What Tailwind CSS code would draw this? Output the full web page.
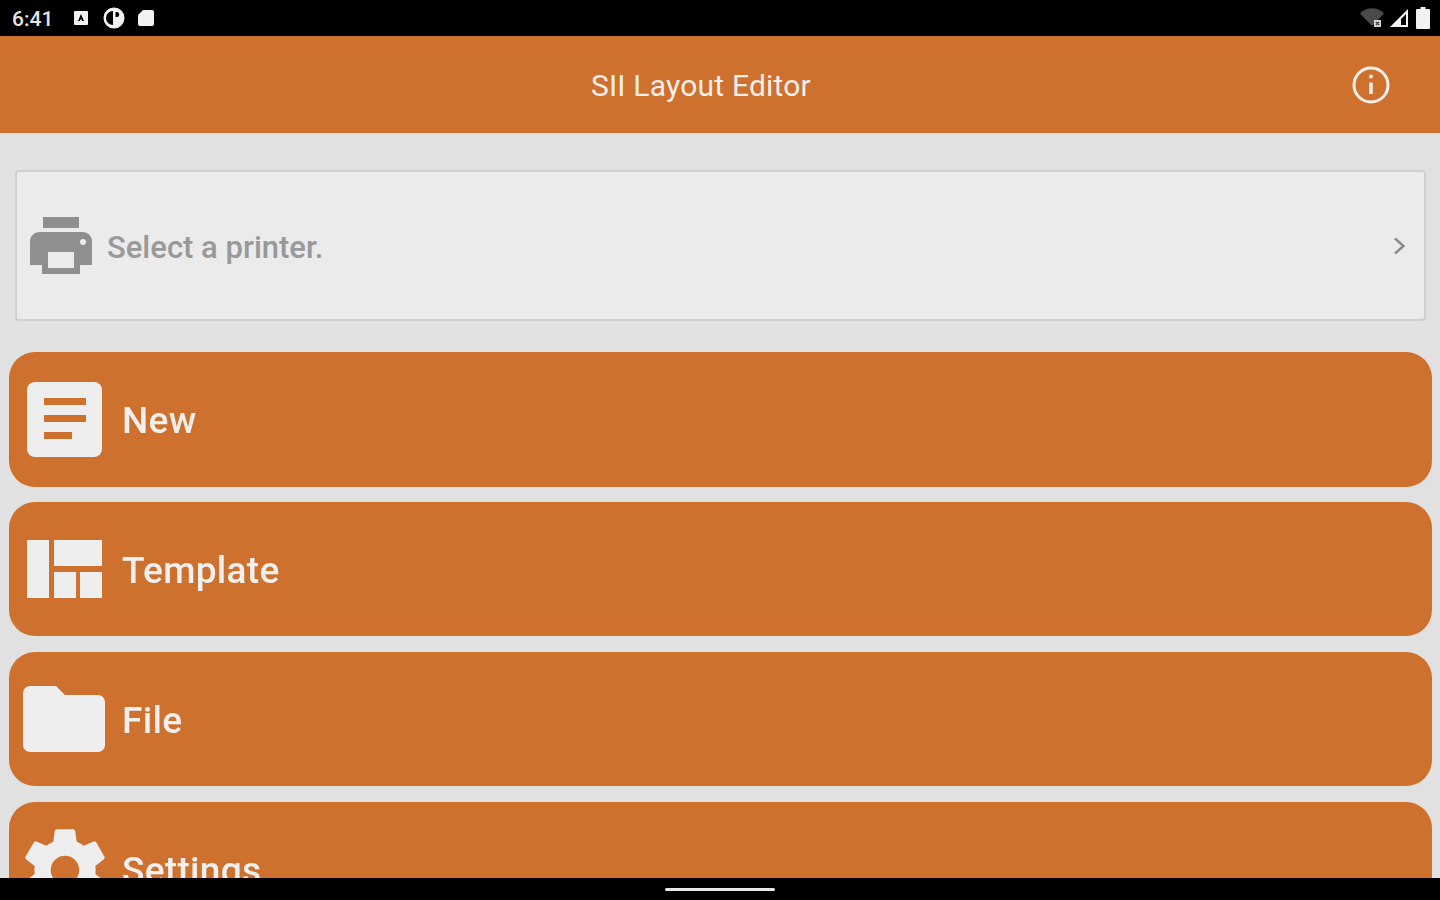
<!DOCTYPE html>
<html lang="en">
<head>
    <meta charset="UTF-8">
    <meta name="viewport" content="width=device-width, initial-scale=1.0">
    <title>SII Layout Editor</title>
    <script src="https://cdn.jsdelivr.net/npm/@tailwindcss/browser@4"></script>
</head>
<body class="bg-[#e1e1e1] font-['Roboto',sans-serif]">

<div class="w-[1440px] h-[900px] flex flex-col overflow-hidden [filter:blur(0.6px)]">
    <!-- status bar -->
    <div class="h-9 shrink-0 bg-black flex items-center justify-between pl-3 pr-[10px] text-[#e4e4e4]">
        <div class="flex items-center">
            <span class="text-[21px] w-[61px] font-medium pt-[3px]">6:41</span>
            <svg class="w-4 h-4 mr-[13px]" viewBox="0 0 16 16"><path fill="#f2f2f2" fill-rule="evenodd" d="M2 1h12a1 1 0 0 1 1 1v12a1 1 0 0 1-1 1H2a1 1 0 0 1-1-1V2a1 1 0 0 1 1-1zm6 3L5 11h1.800l.5-1.400h1.400l.5 1.400H11L8 4z"/></svg>
            <svg class="w-6 h-6 mr-[11px]" viewBox="0 0 24 24"><path fill="#f2f2f2" fill-rule="evenodd" d="M12 1.500a10.500 10.500 0 1 1 0 21 10.500 10.500 0 0 1 0-21zM11 5a7 7 0 0 0 0 14V5zm2.500 1v5h1.200a2.500 2.500 0 0 0 0-5h-1.200z"/></svg>
            <svg class="w-[18px] h-[18px]" viewBox="0 0 18 18"><path fill="#f2f2f2" d="M6 1h9a2 2 0 0 1 2 2v12a2 2 0 0 1-2 2H3a2 2 0 0 1-2-2V6z"/></svg>
        </div>
        <div class="flex items-center gap-[5px]">
            <svg class="w-[24px] h-[22px]" viewBox="0 0 24 22"><path fill="#4a4a4a" d="M0 6.500C6-.5 18-.5 24 6.500L12 19z"/><path fill="#d8d8d8" d="M14 13h7v7h-7z"/><path stroke="#333" stroke-width="1.200" d="M15.800 14.800l3.400 3.400m0-3.400l-3.400 3.400"/></svg>
            <svg class="w-[20px] h-[20px]" viewBox="0 0 20 20"><path fill="#f2f2f2" fill-rule="evenodd" d="M19 1v18H1zM17 6l-5 5v6h5z"/></svg>
            <svg class="w-[14px] h-[22px] ml-[2px]" viewBox="0 0 14 22"><path fill="#f2f2f2" d="M4.500 0h5v2H13a1 1 0 0 1 1 1v18a1 1 0 0 1-1 1H1a1 1 0 0 1-1-1V3a1 1 0 0 1 1-1h3.500z"/></svg>
        </div>
    </div>

    <!-- app bar -->
    <header class="h-[97px] shrink-0 bg-[#ce712f] flex items-center justify-between pl-[591px] pr-[49px] text-[#f5efe9]">
        <h1 class="text-[30px] leading-none tracking-[0.2px] pt-[2px]">SII Layout Editor</h1>
        <svg class="w-10 h-10" viewBox="0 0 40 40" fill="none" stroke="#f5efe9"><circle cx="20" cy="20" r="17" stroke-width="3"/><path stroke-width="3.500" d="M20 17.500V29"/><circle cx="20" cy="11.500" r="2" fill="#f5efe9" stroke="none"/></svg>
    </header>

    <!-- content -->
    <main class="flex-1 min-h-0 overflow-hidden pl-[9px] pr-[8px] pt-[37px]">
        <button class="ml-[6px] w-[1411px] h-[151px] flex items-center justify-between bg-[#ebebeb] border-2 border-[#cfcfcf] rounded-[4px] pl-[12px] pr-[17px]">
            <span class="flex items-center gap-[14px]">
                <svg class="w-[64px] h-[64px]" viewBox="0 0 64 64"><path fill="#8f8f8f" fill-rule="evenodd" d="M14 3h36v11H14zM10 18h44a9 9 0 0 1 9 9v24H51v9H13v-9H1V27a9 9 0 0 1 9-9zm9 20v16h26V38zm35-13a3 3 0 1 0 0 6 3 3 0 0 0 0-6z"/></svg>
                <span class="text-[31px] font-medium text-[#999999] pt-[5px]">Select a printer.</span>
            </span>
            <svg class="w-[14px] h-[18px]" viewBox="0 0 14 18" fill="none" stroke="#8a8a8a" stroke-width="2.400"><path d="M2 1.500L10.500 9 2 16.500"/></svg>
        </button>

        <div class="mt-[31px] flex flex-col">
            <button class="h-[135px] shrink-0 w-full bg-[#ce712f] rounded-[26px] flex items-center pl-[18px] text-[#f2f0ee] text-[37px] tracking-[0.3px] font-medium">
                <span class="w-[95px] flex">
                    <svg class="w-[75px] h-[75px]" viewBox="0 0 75 75"><rect width="75" height="75" rx="8" fill="#eeeeee"/><path fill="#ce712f" d="M17 16h42v7H17zM17 33h42v7H17zM17 50h28v7H17z"/></svg>
                </span>
                <span class="pt-[2px]">New</span>
            </button>
            <button class="mt-[15px] h-[134px] shrink-0 w-full bg-[#ce712f] rounded-[26px] flex items-center pl-[18px] text-[#f2f0ee] text-[37px] tracking-[0.3px] font-medium">
                <span class="w-[95px] flex">
                    <svg class="w-[75px] h-[58px]" viewBox="0 0 75 58"><path fill="#eeeeee" d="M0 0h22v58H0zM27 0h48v26H27zM27 32h22v26H27zM53 32h22v26H53z"/></svg>
                </span>
                <span class="pt-1">Template</span>
            </button>
            <button class="mt-4 h-[134px] shrink-0 w-full bg-[#ce712f] rounded-[26px] flex items-center pl-[14px] text-[#f2f0ee] text-[37px] tracking-[0.3px] font-medium">
                <span class="w-[99px] flex">
                    <svg class="w-[82px] h-[66px]" viewBox="0 0 82 66"><path fill="#eeeeee" d="M7 0h26l9 9h33a7 7 0 0 1 7 7v43a7 7 0 0 1-7 7H7a7 7 0 0 1-7-7V7a7 7 0 0 1 7-7z"/></svg>
                </span>
                <span class="pt-1">File</span>
            </button>
            <button class="mt-4 h-[135px] shrink-0 w-full bg-[#ce712f] rounded-[26px] flex items-center pl-[7px] text-[#f2f0ee] text-[37px] tracking-[0.3px] font-medium">
                <span class="w-[106px] flex">
                    <svg class="w-[98px] h-[98px]" viewBox="0 0 24 24"><path fill="#eeeeee" d="M19.430 12.980c.040-.320.070-.640.070-.980s-.030-.660-.070-.980l2.110-1.650c.190-.150.240-.420.120-.640l-2-3.460c-.120-.220-.390-.300-.610-.220l-2.490 1c-.520-.400-1.080-.730-1.690-.980l-.380-2.650A.488.488 0 0 0 14 2h-4c-.250 0-.460.180-.490.420l-.380 2.650c-.610.250-1.170.590-1.690.980l-2.490-1c-.230-.090-.490 0-.610.220l-2 3.460c-.130.220-.070.490.120.640l2.110 1.650c-.040.320-.070.650-.070.980s.030.660.070.980l-2.110 1.650c-.190.150-.240.420-.120.640l2 3.460c.120.220.390.300.610.220l2.490-1c.520.400 1.080.730 1.690.980l.380 2.650c.030.240.240.420.490.420h4c.250 0 .460-.180.490-.420l.380-2.650c.610-.250 1.170-.590 1.690-.980l2.490 1c.230.090.490 0 .610-.220l2-3.460c.120-.220.070-.490-.120-.640l-2.110-1.650zM12 15.500c-1.930 0-3.500-1.570-3.500-3.500s1.570-3.500 3.500-3.500 3.500 1.570 3.500 3.500-1.570 3.500-3.500 3.500z"/></svg>
                </span>
                <span class="pt-[2px]">Settings</span>
            </button>
        </div>
    </main>

    <!-- nav bar -->
    <div class="h-[22px] shrink-0 bg-black flex items-center justify-center">
        <div class="w-[110px] h-[3px] rounded-full bg-[#e8e8e8]"></div>
    </div>
</div>
</body>
</html>
